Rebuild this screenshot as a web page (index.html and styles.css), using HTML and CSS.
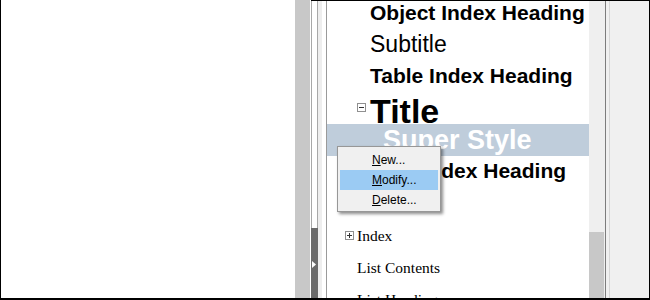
FILE: index.html
```html
<!DOCTYPE html>
<html>
<head>
<meta charset="utf-8">
<link rel="stylesheet" href="styles.css">
</head>
<body>
  <div class="left-pane"></div>
  <div class="gutter"></div>
  <div class="gap"></div>
  <div class="window">
    <div class="splitter">
      <div class="splitter-top"></div>
      <div class="splitter-handle">
        <svg width="7" height="7" viewBox="0 0 7 7"><polygon points="1,0 5,3.5 1,7" fill="#fff"/></svg>
      </div>
    </div>
    <div class="strip"></div>
    <div class="pad"></div>
    <div class="list">
      <div class="row r1 bold">Object Index Heading</div>
      <div class="row r2">Subtitle</div>
      <div class="row r3 bold">Table Index Heading</div>
      <div class="row r4 bold"><span class="exp exp-title"><svg width="9" height="9" viewBox="0 0 9 9"><rect x="0.5" y="0.5" width="8" height="8" fill="#fff" stroke="#909090"/><path d="M2 4.5h5" stroke="#333"/></svg></span>Title</div>
      <div class="row r5 bold">Super Style</div>
      <div class="row r6 bold">User Index Heading</div>
      <div class="row r7 serif"><span class="exp exp-index"><svg width="9" height="9" viewBox="0 0 9 9"><rect x="0.5" y="0.5" width="8" height="8" fill="#fff" stroke="#909090"/><path d="M2 4.5h5M4.5 2v5" stroke="#333"/></svg></span>Index</div>
      <div class="row r8 serif">List Contents</div>
      <div class="row r9 serif">List Heading</div>
    </div>
    <div class="vscroll"><div class="thumb"></div></div>
    <div class="line-dark"></div>
    <div class="side-a"></div>
    <div class="line-light"></div>
    <div class="side-b"></div>
  </div>

  <div class="menu">
    <div class="item"><u>N</u>ew...</div>
    <div class="item active"><u>M</u>odify...</div>
    <div class="item"><u>D</u>elete...</div>
  </div>
</body>
</html>
```
FILE: styles.css
```css
html { background: #fff; }
body {
  margin: 0;
  width: 650px;
  height: 300px;
  box-sizing: border-box;
  border-left: 1px solid #000;
  border-bottom: 2px solid #000;
  display: flex;
  overflow: hidden;
  position: relative;
  font-family: "Liberation Sans", Arial, sans-serif;
  color: #000;
}
.left-pane { width: 294px; background: #fff; }
.gutter { width: 15px; background: #c8c8c8; }
.gap { width: 1px; background: #fff; }
.window {
  flex: 1;
  display: flex;
  border-top: 1px solid #000;
  border-right: 1px solid #000;
  min-height: 0;
}
.splitter { width: 7px; display: flex; flex-direction: column; }
.splitter-top {
  height: 227px;
  box-sizing: border-box;
  background: #fff;
  border-left: 1px solid #a8a8a8;
  border-right: 1px solid #a8a8a8;
}
.splitter-handle {
  flex: 1;
  background: #6b6b6b;
  padding-top: 33px;
}
.splitter-handle svg { display: block; }
.strip { width: 4px; background: #eeeeee; }
.pad { width: 4px; background: #fff; border-right: 1px solid #9a9a9a; }
.list {
  width: 262px;
  background: #fff;
  overflow: hidden;
}
.row { white-space: nowrap; padding-left: 43px; }
.bold { font-weight: bold; }
.r1 { height: 24px; line-height: 24px; font-size: 21px; }
.r2 { height: 38px; line-height: 38px; font-size: 23px; }
.r3 { height: 35px; line-height: 25px; font-size: 21px; }
.r4 { height: 26px; line-height: 26px; font-size: 34px; padding-left: 30px; }
.r5 {
  height: 32px; line-height: 32px; font-size: 27px;
  background: #bfcddb; color: #fff; padding-left: 56px;
}
.r6 { height: 64px; line-height: 30px; font-size: 21px; }
.serif {
  font-family: "Liberation Serif", "Times New Roman", serif;
  font-size: 15.5px;
  height: 32px;
  line-height: 32px;
  padding-left: 30px;
}
.r7 { padding-left: 18px; }
.exp { display: inline-block; width: 9px; height: 9px; margin-right: 4px; }
.exp svg { display: block; }
.exp-title { vertical-align: 11px; }
.exp-index { vertical-align: 1px; margin-right: 3px; }
.vscroll {
  width: 16px;
  background: #efefef;
  display: flex;
  flex-direction: column;
  justify-content: flex-end;
}
.thumb { width: 15px; height: 66px; background: #c8c8c8; }
.line-dark { width: 1px; background: #7c7c7c; }
.side-a { width: 3px; background: #f0f0f0; }
.line-light { width: 1px; background: #d6d6d6; }
.side-b { flex: 1; background: #f0f0f0; }

.menu {
  position: absolute;
  left: 336px;
  top: 146px;
  width: 98px;
  padding: 3px 2px 1px;
  background: #f0f0f0;
  border: 1px solid #979797;
  box-shadow: 2px 2px 3px rgba(0,0,0,0.45);
  font-family: "Liberation Sans", Arial, sans-serif;
  font-size: 12px;
}
.item {
  height: 20px;
  line-height: 20px;
  padding-left: 32px;
  color: #000;
}
.item.active { background: #9bcbf3; }
```
